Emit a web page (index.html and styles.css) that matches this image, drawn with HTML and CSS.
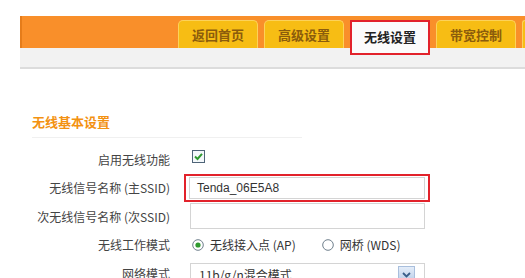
FILE: index.html
```html
<!DOCTYPE html>
<html>
<head>
    <title>无线设置</title>
    <link rel="stylesheet" href="styles.css">
</head>
<body>
    <!-- Top navigation -->
    <div class="header">
        <div class="nav-bar">
            <div class="tab">返回首页</div>
            <div class="tab">高级设置</div>
            <div class="tab active">无线设置</div>
            <div class="tab">带宽控制</div>
            <div class="tab edge"></div>
        </div>
        <div class="sub-bar"></div>
    </div>

    <!-- Wireless basic settings -->
    <div class="content">
        <h2 class="section-title">无线基本设置</h2>
        <div class="form">
            <div class="row">
                <label class="row-label">启用无线功能</label>
                <div class="row-field">
                    <svg class="checkbox" width="13" height="13" viewBox="0 0 13 13">
                        <rect x="0.5" y="0.5" width="12" height="12" fill="#f4f8fb" stroke="#4e6478"/>
                        <path d="M3 6.5 L5.5 9 L10 3.8" fill="none" stroke="#2f9a2f" stroke-width="2"/>
                    </svg>
                </div>
            </div>
            <div class="row">
                <label class="row-label">无线信号名称 (主SSID)</label>
                <div class="row-field">
                    <div class="highlight">
                        <div class="text-input">Tenda_06E5A8</div>
                    </div>
                </div>
            </div>
            <div class="row">
                <label class="row-label">次无线信号名称 (次SSID)</label>
                <div class="row-field">
                    <div class="text-input plain"></div>
                </div>
            </div>
            <div class="row">
                <label class="row-label">无线工作模式</label>
                <div class="row-field radios">
                    <span class="radio-item">
                        <svg width="12" height="12" viewBox="0 0 12 12">
                            <circle cx="6" cy="6" r="5.3" fill="#fff" stroke="#6f7f8c"/>
                            <circle cx="6" cy="6" r="2.6" fill="#2f9a2f"/>
                        </svg>
                        无线接入点 (AP)
                    </span>
                    <span class="radio-item">
                        <svg width="12" height="12" viewBox="0 0 12 12">
                            <circle cx="6" cy="6" r="5.3" fill="#fff" stroke="#6f7f8c"/>
                        </svg>
                        网桥 (WDS)
                    </span>
                </div>
            </div>
            <div class="row">
                <label class="row-label">网络模式</label>
                <div class="row-field">
                    <div class="select">
                        <span>11b/g/n混合模式</span>
                        <span class="select-arrow">
                            <svg width="9" height="6" viewBox="0 0 9 6">
                                <path d="M1 1 L4.5 4.5 L8 1" fill="none" stroke="#3b5f8a" stroke-width="1.8"/>
                            </svg>
                        </span>
                    </div>
                </div>
            </div>
        </div>
    </div>
</body>
</html>
```

FILE: styles.css
```css
body {
    margin: 0;
    background-color: #fff;
    font-family: "Noto Sans CJK SC", "Liberation Sans", sans-serif;
    font-size: 12px;
    color: #444;
}
/* Header with tabs */
.header {
    margin: 16px 0 0 20px;
}
.nav-bar {
    height: 32px;
    background-color: #f98f2a;
    border-left: 2px solid #e57c1a;
    display: flex;
    align-items: flex-start;
    gap: 6px;
    padding: 4px 0 0 156px;
    box-sizing: border-box;
}
.tab {
    width: 80px;
    height: 28px;
    flex-shrink: 0;
    box-sizing: border-box;
    background-color: #f7bd14;
    border: 1px solid #fcd25a;
    border-bottom: none;
    border-radius: 5px 5px 0 0;
    color: #8b5c0c;
    font-weight: bold;
    font-size: 13px;
    text-align: center;
    line-height: 28px;
}
.tab.active {
    position: relative;
    z-index: 1;
    height: 35px;
    background-color: #fbfbfb;
    border: 2px solid #e2222b;
    border-radius: 0;
    color: #222;
    line-height: 29px;
}
.tab.edge {
    width: 3px;
    border-right: none;
    border-radius: 5px 0 0 0;
}
.sub-bar {
    height: 19px;
    background-color: #f2f2f2;
    border-bottom: 2px solid #dcdcdc;
}
/* Content */
.content {
    padding: 44px 0 0 32px;
}
.section-title {
    margin: 0;
    width: 270px;
    padding-bottom: 6px;
    border-bottom: 1px solid #f0f0f0;
    color: #f39212;
    font-size: 13px;
    font-weight: bold;
    line-height: 18px;
}
.form {
    margin-top: 7px;
}
.row {
    display: flex;
    align-items: center;
    height: 28.5px;
}
.row-label {
    width: 138px;
    text-align: right;
    color: #444;
}
.row-field {
    margin-left: 20px;
    display: flex;
    align-items: center;
}
.checkbox {
    margin-left: 2px;
    margin-bottom: 6px;
}
.highlight {
    margin-left: -6px;
    border: 2px solid #e2222b;
    padding: 1px 3px;
}
.text-input {
    width: 236px;
    height: 22px;
    box-sizing: border-box;
    border: 1px solid #d4d4d4;
    background-color: #fff;
    padding-left: 7px;
    line-height: 20px;
    color: #333;
    font-family: "Liberation Sans", sans-serif;
    font-size: 12px;
}
.text-input.plain {
    width: 235px;
    height: 26px;
}
.radios {
    gap: 26px;
    margin-left: 22px;
}
.radio-item {
    display: flex;
    align-items: center;
    gap: 6px;
    color: #333;
}
.select {
    width: 235px;
    height: 26px;
    box-sizing: border-box;
    border: 1px solid #d4d4d4;
    margin-top: 6px;
    padding: 2px 8px 0 8px;
    display: flex;
    justify-content: space-between;
    align-items: flex-start;
    color: #333;
}
.select-arrow {
    width: 15px;
    height: 15px;
    margin-right: 1px;
    background: linear-gradient(#e4edf9, #b9cde8);
    border: 1px solid #a9bfdd;
    display: flex;
    align-items: center;
    justify-content: center;
}
```
